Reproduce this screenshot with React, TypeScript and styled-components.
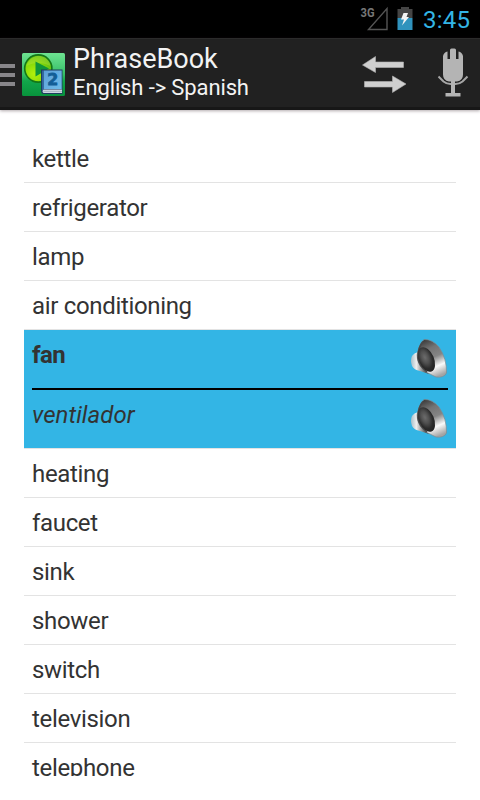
import React from 'react';
import styled, { createGlobalStyle, css } from 'styled-components';

const GlobalStyle = createGlobalStyle`
  html, body { margin: 0; padding: 0; background: #fff; overflow: hidden; }
  * { box-sizing: border-box; }
  svg { display: block; flex: none; }
`;

const Screen = styled.div`
  width: 480px;
  height: 800px;
  overflow: hidden;
  display: flex;
  flex-direction: column;
  background: #fff;
  font-family: Roboto, sans-serif;
  color: #333;
`;

const StatusBar = styled.header`
  height: 38px;
  flex: none;
  display: flex;
  justify-content: flex-end;
  background: #000;
  padding-right: 10px;
`;

const Clock = styled.time`
  width: 47px;
  margin-left: 10px;
  font-size: 24px;
  line-height: 40px;
  letter-spacing: 0.2px;
  color: #33b5e5;
  white-space: nowrap;
`;

const ActionBar = styled.nav`
  height: 72px;
  flex: none;
  display: flex;
  background: #212121;
  border-top: 1px solid #2b2b2b;
  border-bottom: 3px solid #171717;
  box-shadow: 0 1px 3px rgba(60, 40, 50, 0.4);
`;

const Drawer = styled.div`
  width: 15px;
  margin: 25px 7px 0 0;
  display: flex;
  flex-direction: column;
  gap: 5px;
`;

const DrawerLine = styled.span`
  height: 4px;
  background: #88868a;
`;

const LogoSlot = styled.div`
  width: 43px;
  padding-top: 14px;
`;

const Titles = styled.div`
  width: 296px;
  padding: 4px 0 0 8px;
  color: #f3f3f3;
  white-space: nowrap;
`;

const Title = styled.h1`
  margin: 0;
  font-size: 27px;
  font-weight: 400;
  line-height: 32px;
`;

const Subtitle = styled.div`
  font-size: 22px;
  line-height: 26px;
  letter-spacing: -0.12px;
`;

const Action = styled.button<{ $width: number }>`
  width: ${(p) => p.$width}px;
  height: 68px;
  padding: 0;
  border: 0;
  background: none;
`;

const PhraseList = styled.ul`
  height: 642px;
  margin: 24px 24px 0;
  padding: 0;
  list-style: none;
  overflow: hidden;
  font-size: 24px;
  letter-spacing: -0.33px;
`;

const rowLine = css`
  border-bottom: 1px solid #e3e3e3;
`;

const Phrase = styled.li`
  height: 49px;
  padding-left: 8px;
  line-height: 50px;
  ${rowLine}
`;

const OpenPhrase = styled.li`
  height: 119px;
  padding: 0 8px;
  background: #33b5e5;
  background-clip: padding-box;
  ${rowLine}
`;

const Entry = styled.div<{ $translated?: boolean }>`
  height: ${(p) => (p.$translated ? 58 : 60)}px;
  display: flex;
  justify-content: space-between;
  line-height: 50px;
  letter-spacing: ${(p) => (p.$translated ? '0.05px' : '-0.6px')};
  font-weight: ${(p) => (p.$translated ? 400 : 700)};
  font-style: ${(p) => (p.$translated ? 'italic' : 'normal')};
  border-bottom: ${(p) => (p.$translated ? 'none' : '2px solid #000')};
`;

const SignalIcon = () => (
  <svg width="30" height="38" viewBox="0 0 30 38">
    <text x="0.5" y="17" fontFamily="Roboto" fontWeight="700" fontSize="13" fill="#777" textLength="14" lengthAdjust="spacingAndGlyphs">3G</text>
    <path d="M8.500 29.500H27V8.500Z" fill="none" stroke="#555" strokeWidth="1.400" />
  </svg>
);

const BatteryIcon = () => (
  <svg width="16" height="38" viewBox="0 0 16 38">
    <path d="M0.500 9H4V7H12V9H15.500V18H0.500Z" fill="#454545" />
    <path d="M0.500 18H15.500V30H0.500Z" fill="#3093bd" />
    <path d="M6.500 13H11L9.500 17H12L5 25.500L7 19.500H4Z" fill="#f4f4f4" />
  </svg>
);

const BatterySlot = styled.div`
  margin-left: 7px;
`;

const Logo = () => (
  <svg width="43" height="44" viewBox="0 0 43 44">
    <defs>
      <linearGradient id="tile" x1="0" y1="0" x2="0" y2="1">
        <stop offset="0" stopColor="#6ee391" />
        <stop offset="0.5" stopColor="#35bd66" />
        <stop offset="0.65" stopColor="#12a64b" />
        <stop offset="1" stopColor="#08933c" />
      </linearGradient>
      <radialGradient id="disc" cx="0.35" cy="0.7" r="0.75">
        <stop offset="0" stopColor="#b4f00a" />
        <stop offset="0.5" stopColor="#8bdc0a" />
        <stop offset="1" stopColor="#58b814" />
      </radialGradient>
      <linearGradient id="cover" x1="0" y1="0" x2="1" y2="1">
        <stop offset="0" stopColor="#5b9fd8" />
        <stop offset="1" stopColor="#70bce9" />
      </linearGradient>
    </defs>
    <rect width="43" height="43" rx="1.500" fill="url(#tile)" />
    <circle cx="16.300" cy="15.500" r="13.600" fill="url(#disc)" stroke="#147817" strokeWidth="1.600" />
    <path d="M4.500 13C7 5 13 3 17 3C24 3 28 8 28.500 13C20 9 12 9 4.500 13Z" fill="#c4f04c" opacity=".3" />
    <path d="M13.500 8.500L27 15.500L13.500 23.500Z" fill="#10963a" />
    <path d="M19 16.500H40.500V41H21Q19 40.500 19 38Z" fill="#1d3d60" />
    <path d="M21.500 17.500H39.700V36H21.500Z" fill="url(#cover)" />
    <path d="M20 17.500H21.500V36L20 38Z" fill="#2f659d" />
    <path d="M21.500 36.500H40V40H21.500Q19.500 38.500 21.500 36.500Z" fill="#cbd4df" />
    <path d="M21.500 38.500H40" stroke="#9badb9" strokeWidth=".7" />
    <text x="25.200" y="32" fontFamily="DejaVu Sans" fontWeight="700" fontSize="15.5" fill="#135e96" stroke="#135e96" strokeWidth=".8" textLength="11" lengthAdjust="spacingAndGlyphs">2</text>
  </svg>
);

const SwapIcon = () => (
  <svg width="62" height="68" viewBox="0 0 62 68">
    <g fill="#cfcfcf" stroke="#b4b4b4" strokeWidth=".6">
      <path d="M1.500 26L14.500 17.500V23H42.500V28.500H14.500V33.500Z" />
      <path d="M3.500 42.500H31.500V37L45 45L31.500 53.500V48H3.500Z" />
    </g>
  </svg>
);

const MicIcon = () => (
  <svg width="56" height="68" viewBox="0 0 56 68">
    <path d="M18 17Q19 13 22.500 12.500V20H25V11Q25 9.500 26.500 9.500H29.500Q31 9.500 31 11V20H33.500V12.500Q37 13 38 17V35.500Q38 41.500 32 42.500H24Q18 41.500 18 35.500Z" fill="#b4b4b4" />
    <path d="M13.500 37.500L18.500 42.500Q21.500 45 25.500 45H30.500Q34.500 45 37.500 42.500L42.500 37.500" fill="none" stroke="#a5a5a5" strokeWidth="2" />
    <path d="M26 42H30V54H35.500V57.500H20.500V54H26Z" fill="#b4b4b4" />
  </svg>
);

const SpeakerIcon = ({ id }: { id: string }) => (
  <svg width="39" height="58" viewBox="0 0 39 58">
    <defs>
      <linearGradient id={`rim-${id}`} x1="0.3" y1="0" x2="0.65" y2="1">
        <stop offset="0" stopColor="#3c3c3c" />
        <stop offset="0.25" stopColor="#747474" />
        <stop offset="0.5" stopColor="#858585" />
        <stop offset="0.75" stopColor="#fafafa" />
        <stop offset="1" stopColor="#a4a4a4" />
      </linearGradient>
      <linearGradient id={`base-${id}`} x1="0" y1="0" x2="1" y2="0">
        <stop offset="0" stopColor="#a9bfc8" />
        <stop offset="0.3" stopColor="#efefef" />
        <stop offset="0.7" stopColor="#777" />
        <stop offset="1" stopColor="#333" />
      </linearGradient>
      <radialGradient id={`cone-${id}`} cx="0.46" cy="0.4" r="0.6">
        <stop offset="0" stopColor="#6c6c6c" />
        <stop offset="0.4" stopColor="#505050" />
        <stop offset="0.75" stopColor="#2c2c2c" />
        <stop offset="1" stopColor="#222" />
      </radialGradient>
    </defs>
    <path d="M3 26Q5 23 9 22L20 44L11 41Q5 40 3 36Q1 30 3 26Z" fill={`url(#base-${id})`} />
    <path d="M15 9.5Q23 9 30 17Q38 29 37.5 43Q35 48 27 47L17 42Q8 35 8 25Q10 14 15 9.5Z" fill={`url(#rim-${id})`} stroke="#7c8b92" strokeWidth=".7" />
    <path d="M14 11.5Q9 17 9 28Q10 36 18 42" fill="none" stroke="#484848" strokeWidth="1.8" />
    <ellipse cx="17.5" cy="29.5" rx="7.5" ry="13" transform="rotate(-23 17.5 29.5)" fill={`url(#cone-${id})`} />
  </svg>
);

const ListPadding = styled.div`
  height: 24px;
  flex: none;
`;

const before = ['kettle', 'refrigerator', 'lamp', 'air conditioning'];
const after = ['heating', 'faucet', 'sink', 'shower', 'switch', 'television', 'telephone'];

export default function App() {
  return (
    <Screen>
      <GlobalStyle />
      <StatusBar>
        <SignalIcon />
        <BatterySlot><BatteryIcon /></BatterySlot>
        <Clock>3:45</Clock>
      </StatusBar>
      <ActionBar>
        <Drawer><DrawerLine /><DrawerLine /><DrawerLine /></Drawer>
        <LogoSlot><Logo /></LogoSlot>
        <Titles>
          <Title>PhraseBook</Title>
          <Subtitle>English -&gt; Spanish</Subtitle>
        </Titles>
        <Action $width={64} aria-label="Swap languages"><SwapIcon /></Action>
        <Action $width={55} aria-label="Speak"><MicIcon /></Action>
      </ActionBar>
      <PhraseList>
        {before.map((word) => <Phrase key={word}>{word}</Phrase>)}
        <OpenPhrase>
          <Entry>fan<SpeakerIcon id="source" /></Entry>
          <Entry $translated>ventilador<SpeakerIcon id="target" /></Entry>
        </OpenPhrase>
        {after.map((word) => <Phrase key={word}>{word}</Phrase>)}
      </PhraseList>
      <ListPadding />
    </Screen>
  );
}
